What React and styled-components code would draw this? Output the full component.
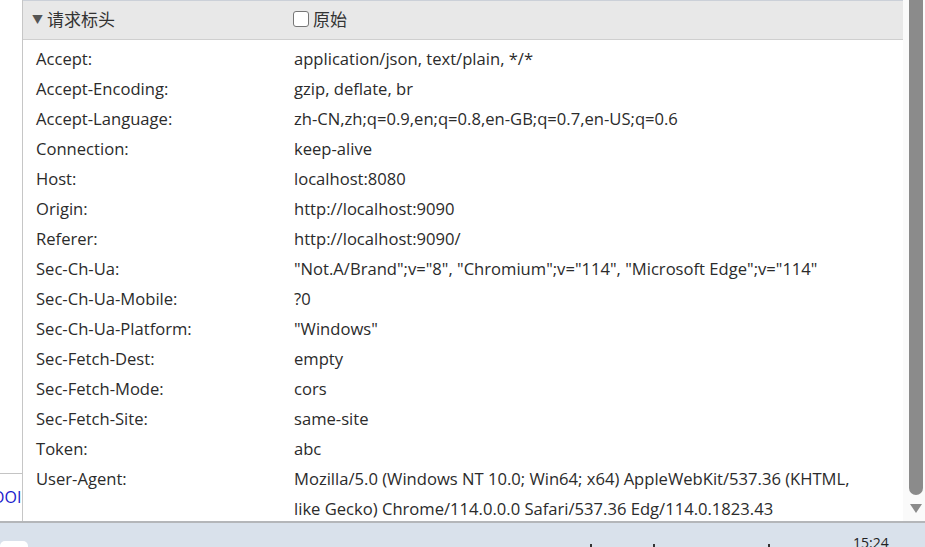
import React from 'react';
import styled, { createGlobalStyle } from 'styled-components';

const GlobalStyle = createGlobalStyle`
    html, body {
        margin: 0;
        padding: 0;
        background: #fff;
    }
    body {
        font-family: "Open Sans", "Noto Sans", "Noto Sans CJK SC", sans-serif;
        color: #222;
        overflow: hidden;
    }
`;

const Screen = styled.div`
    width: 925px;
    height: 547px;
    display: flex;
    flex-direction: column;
    overflow: hidden;
`;

const Main = styled.div`
    flex: 1;
    display: flex;
    min-height: 0;
    border-bottom: 2px solid #b4b6b9;
`;

const LeftStrip = styled.div`
    width: 22px;
    display: flex;
    flex-direction: column;
    overflow: hidden;
`;

const StripTop = styled.div`
    height: 473px;
    border-bottom: 1px solid #c4c4c4;
`;

const StripLink = styled.div`
    padding-top: 12px;
    margin-left: -8px;
    font-size: 16px;
    color: #1a1acc;
    white-space: nowrap;
`;

const Panel = styled.div`
    flex: 1;
    border-left: 1px solid #c6c6c6;
    display: flex;
    flex-direction: column;
    min-width: 0;
    overflow: hidden;
`;

const Header = styled.div`
    flex-shrink: 0;
    height: 35px;
    padding-bottom: 3px;
    background: #e8e8e8;
    border-top: 1px solid #cbd0d8;
    border-bottom: 1px solid #cfcfcf;
    display: flex;
    align-items: center;
    font-size: 17px;
    color: #333;
`;

const Toggle = styled.div`
    box-sizing: border-box;
    width: 270px;
    padding-left: 9px;
    display: flex;
    align-items: center;
    gap: 4px;
`;

const Arrow = styled.span`
    font-size: 11px;
    color: #555;
`;

const RawLabel = styled.label`
    display: flex;
    align-items: center;
    gap: 4px;
`;

const Box = styled.span`
    box-sizing: border-box;
    width: 16px;
    height: 16px;
    border: 1px solid #767676;
    border-radius: 3px;
    background: #fff;
`;

const Rows = styled.div`
    padding: 4px 0 0 13px;
    font-size: 16.6px;
    line-height: 30px;
    color: #2b2b2b;
`;

const Row = styled.div`
    display: flex;
`;

const Name = styled.div`
    width: 258px;
    flex-shrink: 0;
`;

const Value = styled.div`
    width: 580px;
`;

const Scroll = styled.div`
    width: 22px;
    background: #fafafa;
    display: flex;
    flex-direction: column;
    align-items: center;
    padding-left: 3px;
    box-sizing: border-box;
`;

const Thumb = styled.div`
    width: 14px;
    height: 495px;
    background: #8b8b8b;
    border-radius: 0 0 7px 7px;
`;

const DownArrow = styled.div`
    margin-top: 9px;
    width: 0;
    height: 0;
    border-left: 6px solid transparent;
    border-right: 6px solid transparent;
    border-top: 9px solid #8b8b8b;
`;

const Taskbar = styled.div`
    height: 24px;
    background: #d9e1eb;
    display: flex;
    align-items: flex-end;
    position: relative;
    overflow: hidden;
`;

const StartButton = styled.div`
    width: 28px;
    height: 8px;
    background: #fff;
    border-radius: 5px 5px 0 0;
    margin-bottom: -2px;
`;

const TrayMark = styled.span`
    position: absolute;
    bottom: 0;
    left: ${p => p.x}px;
    width: 2px;
    height: 3px;
    background: #333;
`;

const Clock = styled.div`
    position: absolute;
    left: 853px;
    top: 10px;
    font-size: 14px;
    color: #222;
    font-family: "Open Sans", sans-serif;
`;

const headers = [
    ['Accept:', 'application/json, text/plain, */*'],
    ['Accept-Encoding:', 'gzip, deflate, br'],
    ['Accept-Language:', 'zh-CN,zh;q=0.9,en;q=0.8,en-GB;q=0.7,en-US;q=0.6'],
    ['Connection:', 'keep-alive'],
    ['Host:', 'localhost:8080'],
    ['Origin:', 'http://localhost:9090'],
    ['Referer:', 'http://localhost:9090/'],
    ['Sec-Ch-Ua:', '"Not.A/Brand";v="8", "Chromium";v="114", "Microsoft Edge";v="114"'],
    ['Sec-Ch-Ua-Mobile:', '?0'],
    ['Sec-Ch-Ua-Platform:', '"Windows"'],
    ['Sec-Fetch-Dest:', 'empty'],
    ['Sec-Fetch-Mode:', 'cors'],
    ['Sec-Fetch-Site:', 'same-site'],
    ['Token:', 'abc'],
    ['User-Agent:', 'Mozilla/5.0 (Windows NT 10.0; Win64; x64) AppleWebKit/537.36 (KHTML, like Gecko) Chrome/114.0.0.0 Safari/537.36 Edg/114.0.1823.43'],
];

export default function App() {
    return (
        <Screen>
            <GlobalStyle />
            <Main>
                <LeftStrip>
                    <StripTop />
                    <StripLink>OOI</StripLink>
                </LeftStrip>
                <Panel>
                    <Header>
                        <Toggle>
                            <Arrow>▼</Arrow>
                            请求标头
                        </Toggle>
                        <RawLabel>
                            <Box />
                            原始
                        </RawLabel>
                    </Header>
                    <Rows>
                        {headers.map(([name, value]) => (
                            <Row key={name}>
                                <Name>{name}</Name>
                                <Value>{value}</Value>
                            </Row>
                        ))}
                    </Rows>
                </Panel>
                <Scroll>
                    <Thumb />
                    <DownArrow />
                </Scroll>
            </Main>
            <Taskbar>
                <StartButton />
                <TrayMark x={590} />
                <TrayMark x={653} />
                <TrayMark x={768} />
                <Clock>15:24</Clock>
            </Taskbar>
        </Screen>
    );
}
